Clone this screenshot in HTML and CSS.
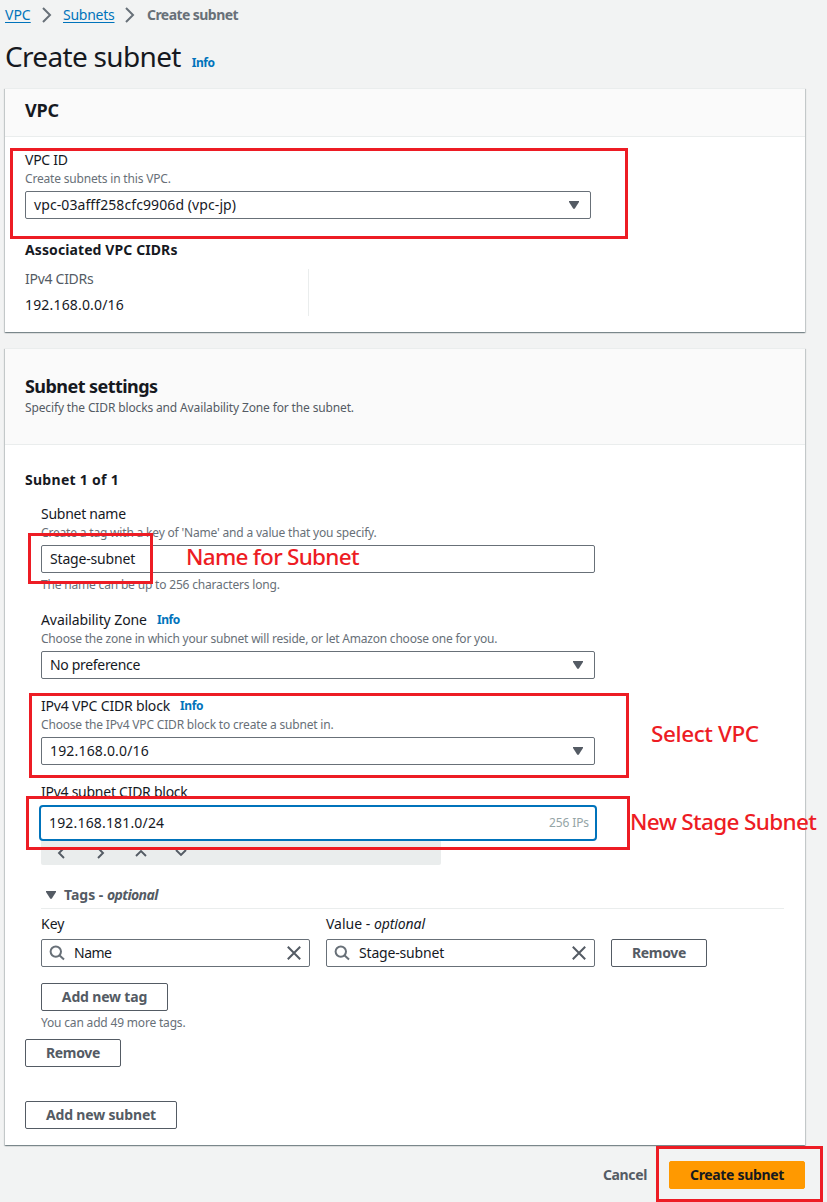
FILE: index.html
```html
<!DOCTYPE html>
<html lang="en">
<head>
<meta charset="utf-8">
<title>Create subnet</title>
<link rel="stylesheet" href="styles.css">
</head>
<body>
<svg class="defs" width="0" height="0">
  <symbol id="caret" viewBox="0 0 10 8"><path d="M0 0H10V1L6 7.2Q5 8.6 4 7.2L0 1Z" fill="#545b64"/></symbol>
  <symbol id="search" viewBox="0 0 16 16"><circle cx="6.8" cy="6.6" r="5.2" fill="none" stroke="#687078" stroke-width="2"/><path d="M10.4 10.2L15 14.4" stroke="#687078" stroke-width="2"/></symbol>
  <symbol id="close" viewBox="0 0 14 14"><path d="M.8.8L13.2 13.2M13.2.8L.8 13.2" stroke="#545b64" stroke-width="2"/></symbol>
  <symbol id="crumb" viewBox="0 0 10 16"><path d="M1 1L8 8L1 15" fill="none" stroke="#687078" stroke-width="2"/></symbol>
  <symbol id="chev" viewBox="0 0 8 12"><path d="M1 1L6 6L1 11" fill="none" stroke="#545b64" stroke-width="1.9"/></symbol>
</svg>
<main class="page">
  <nav class="breadcrumbs">
    <a class="crumb-vpc">VPC</a><svg class="sep"><use href="#crumb"/></svg>
    <a class="crumb-subnets">Subnets</a><svg class="sep"><use href="#crumb"/></svg>
    <b class="crumb-current">Create subnet</b>
  </nav>
  <header class="title"><h1>Create subnet</h1><a class="info">Info</a></header>

  <section class="panel">
    <div class="panel-head"><h2>VPC</h2></div>
    <div class="panel-body vpc-body">
      <div class="label tight">VPC ID</div>
      <div class="hint">Create subnets in this VPC.</div>
      <div class="field select vpc-select"><span class="id">vpc-03afff258cfc9906d (vpc-jp)</span><svg class="caret"><use href="#caret"/></svg></div>
      <h3 class="associated">Associated VPC CIDRs</h3>
      <div class="cidr-col">
        <div class="muted">IPv4 CIDRs</div>
        <div class="num">192.168.0.0/16</div>
      </div>
    </div>
  </section>

  <section class="panel settings">
    <div class="panel-head tall">
      <h2 class="tighter">Subnet settings</h2>
      <p class="desc">Specify the CIDR blocks and Availability Zone for the subnet.</p>
    </div>
    <div class="panel-body settings-body">
      <h3 class="subnet-count">Subnet 1 of 1</h3>
      <div class="subnet">
        <div class="form-item name-item">
          <div class="label tight">Subnet name</div>
          <div class="hint">Create a tag with a key of 'Name' and a value that you specify.</div>
          <div class="field"><span class="stage">Stage-subnet</span></div>
          <div class="hint below">The name can be up to 256 characters long.</div>
        </div>
        <div class="form-item">
          <div class="label"><span class="az">Availability Zone</span><a class="info">Info</a></div>
          <div class="hint zone-hint">Choose the zone in which your subnet will reside, or let Amazon choose one for you.</div>
          <div class="field select"><span class="preference">No preference</span><svg class="caret"><use href="#caret"/></svg></div>
        </div>
        <div class="form-item">
          <div class="label"><span class="block">IPv4 VPC CIDR block</span><a class="info">Info</a></div>
          <div class="hint">Choose the IPv4 VPC CIDR block to create a subnet in.</div>
          <div class="field select"><span class="num">192.168.0.0/16</span><svg class="caret"><use href="#caret"/></svg></div>
        </div>
        <div class="form-item cidr-item">
          <div class="label tight">IPv4 subnet CIDR block</div>
          <div class="field focused"><span class="num">192.168.181.0/24</span><span class="ips">256 IPs</span></div>
          <div class="stepper">
            <svg class="left"><use href="#chev"/></svg><svg><use href="#chev"/></svg><svg class="up"><use href="#chev"/></svg><svg class="down"><use href="#chev"/></svg>
          </div>
        </div>
        <div class="tags-head"><svg class="caret"><use href="#caret"/></svg><b>Tags - <i>optional</i></b></div>
        <div class="tag-row">
          <div class="tag-col"><div class="label">Key</div>
            <div class="field search"><svg class="glass"><use href="#search"/></svg><span class="name">Name</span><svg class="close"><use href="#close"/></svg></div></div>
          <div class="tag-col"><div class="label">Value - <i>optional</i></div>
            <div class="field search"><svg class="glass"><use href="#search"/></svg><span class="stage">Stage-subnet</span><svg class="close"><use href="#close"/></svg></div></div>
          <button class="btn remove">Remove</button>
        </div>
        <button class="btn add-tag">Add new tag</button>
        <div class="hint below">You can add 49 more tags.</div>
      </div>
      <button class="btn remove">Remove</button>
      <button class="btn add-subnet">Add new subnet</button>
    </div>
  </section>

  <footer class="actions"><a class="cancel">Cancel</a><button class="btn primary">Create subnet</button></footer>

  <div class="mark mark-vpc"></div>
  <div class="mark mark-name"></div>
  <div class="mark mark-block"></div>
  <div class="mark mark-cidr"></div>
  <div class="mark mark-create"></div>
  <div class="note note-name">Name for Subnet</div>
  <div class="note note-vpc">Select VPC</div>
  <div class="note note-stage">New Stage Subnet</div>
</main>
</body>
</html>
```
FILE: styles.css
```css
* { box-sizing: border-box; }
body { margin: 0; background: #f2f3f3; color: #16191f; font: 14px/22px "Noto Sans", sans-serif; }
h1, h2, h3, p { margin: 0; }
svg { display: block; flex: none; }
.defs { position: absolute; }
.page { position: relative; width: 827px; height: 1202px; overflow: hidden; padding: 4px 22px 0 5px; }

.breadcrumbs { display: flex; align-items: center; height: 22px; }
.breadcrumbs a { color: #0073bb; text-decoration: underline; text-underline-offset: 2px; }
.breadcrumbs b { color: #687078; }
.sep { width: 10px; height: 16px; }
.crumb-vpc { width: 37px; }
.crumb-subnets { width: 62px; margin-left: 11px; letter-spacing: -.25px; }
.crumb-current { margin-left: 12px; letter-spacing: -.56px; }

.title { display: flex; align-items: baseline; height: 62px; padding-top: 12px; }
h1 { font-size: 28px; font-weight: 400; line-height: 36px; letter-spacing: -.68px; }
.info { color: #0073bb; font-size: 12px; font-weight: 700; letter-spacing: -.4px; margin-left: 10px; }
.title .info { margin-left: 11px; }

.panel { width: 800px; height: 244px; background: #fff; border-top: 1px solid #eaeded; box-shadow: 0 1px 1px 0 rgba(0,28,36,.3), 1px 1px 1px 0 rgba(0,28,36,.15), -1px 1px 1px 0 rgba(0,28,36,.15); }
.panel-head { height: 48px; padding: 10px 20px 0; background: #fafafa; border-bottom: 1px solid #eaeded; }
h2 { font-size: 18px; line-height: 22px; letter-spacing: -.14px; }
h2.tighter { letter-spacing: -.55px; }
.settings { height: 797px; margin-top: 16px; }
.panel-head.tall { height: 96px; padding-top: 26px; }
.desc { font-size: 12px; line-height: 16px; margin-top: 3px; color: #545b64; letter-spacing: -.14px; }
.panel-body { padding: 0 20px; }
.vpc-body { padding-top: 12px; }
.settings-body { padding-top: 24px; display: flex; flex-direction: column; align-items: flex-start; }
h3 { font-size: 14px; line-height: 22px; letter-spacing: .1px; }

.label { display: flex; height: 22px; white-space: pre; }
.tight { letter-spacing: -.26px; }
.preference { letter-spacing: -.32px; }
.az { letter-spacing: -.08px; }
.block { letter-spacing: -.18px; }
.hint { font-size: 12px; line-height: 16px; color: #687078; letter-spacing: -.18px; white-space: nowrap; }
.zone-hint { letter-spacing: -.21px; }
.hint.below { margin-top: 4px; }
.muted { color: #545b64; line-height: 20px; letter-spacing: -.28px; }
.num { letter-spacing: .17px; }
.id { letter-spacing: .09px; }
.stage { letter-spacing: -.18px; }
.name { letter-spacing: -.49px; }

.field { display: flex; align-items: center; width: 554px; height: 28px; margin-top: 4px; padding: 0 11px 0 8px; border: 1px solid #687078; border-radius: 2px; background: #fff; }
.select { justify-content: space-between; }
.vpc-select { width: 566px; }
.caret { width: 10px; height: 8px; }
.associated { margin-top: 20px; }
.cidr-col { width: 284px; height: 47px; margin-top: 8px; border-right: 1px solid #eaeded; }
.cidr-col .num { margin-top: 5px; }

.subnet-count { letter-spacing: .28px; }
.subnet { width: 759px; padding: 12px 0 0 16px; }
.form-item { height: 86px; }
.name-item { height: 106px; }
.cidr-item { height: 103px; }
.field.focused { justify-content: space-between; width: 558px; height: 36px; margin: 2px 0 0 -2px; padding: 0 6px 0 8px; border: 2px solid #0073bb; border-radius: 4px; }
.ips { font-size: 12px; color: #95a5a6; letter-spacing: -.1px; }
.stepper { display: flex; align-items: center; gap: 32px; width: 400px; height: 24px; padding-left: 16px; background: #eaeded; border-radius: 0 0 2px 2px; }
.stepper svg { width: 8px; height: 12px; }
.stepper .left { transform: rotate(180deg); }
.stepper .up { transform: rotate(-90deg); }
.stepper .down { transform: rotate(90deg); }

.tags-head { display: flex; align-items: center; width: 743px; height: 25px; padding: 0 0 2px 5px; color: #545b64; border-bottom: 1px solid #eaeded; }
.tags-head b { margin-left: 8px; white-space: pre; }
.tags-head i { letter-spacing: -.6px; }
.tag-row { display: flex; align-items: flex-end; gap: 16px; margin-top: 4px; }
.tag-col .field { width: 269px; padding: 0 8px; }
.label i { letter-spacing: -.1px; }
.search .glass { width: 16px; height: 16px; margin: 0 9px 0 -1px; }
.search .close { width: 14px; height: 14px; margin-left: auto; }

.btn { height: 28px; padding: 0; border: 1px solid #545b64; border-radius: 2px; background: #fff; color: #545b64; font: 700 14px/20px "Noto Sans", sans-serif; letter-spacing: -.17px; text-align: center; flex: none; }
.remove { width: 96px; letter-spacing: -.3px; }
.add-tag { display: block; width: 127px; margin-top: 16px; }
.settings-body > .remove { margin-top: 8px; }
.add-subnet { width: 152px; margin-top: 34px; }
.actions { display: flex; align-items: center; justify-content: flex-end; gap: 22px; height: 28px; margin-top: 16px; }
.cancel { color: #545b64; font-weight: 700; letter-spacing: -.37px; }
.primary { width: 136px; background: #f90; border-color: #f90; color: #16191f; letter-spacing: -.33px; }

/* Red callouts laid over the form */
.mark { position: absolute; border: 3px solid #ed1c24; }
.mark-vpc { left: 10px; top: 148px; width: 618px; height: 91px; }
.mark-name { left: 28px; top: 533px; width: 125px; height: 51px; }
.mark-block { left: 29px; top: 693px; width: 600px; height: 85px; }
.mark-cidr { left: 26px; top: 796px; width: 604px; height: 54px; }
.mark-create { left: 656px; top: 1146px; width: 167px; height: 56px; }
.note { position: absolute; color: #ed1c24; font-size: 22.5px; font-weight: 500; line-height: 30px; white-space: nowrap; }
.note-name { left: 186px; top: 542px; letter-spacing: -.72px; }
.note-vpc { left: 651px; top: 719px; letter-spacing: -.4px; }
.note-stage { left: 630px; top: 807px; letter-spacing: -.65px; }
```
